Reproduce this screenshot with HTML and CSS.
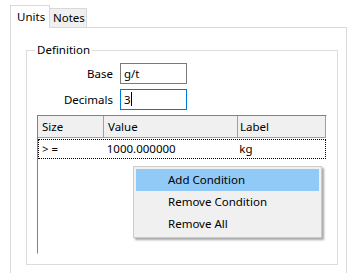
FILE: index.html
```html
<!DOCTYPE html>
<html>
<head>
<meta charset="utf-8">
<link rel="stylesheet" href="styles.css">
</head>
<body>
<div class="tabs">
  <div class="tab active">Units</div>
  <div class="tab">Notes</div>
</div>
<div class="panel">
  <fieldset class="group">
    <legend class="legend">Definition</legend>
    <div class="form">
      <label class="lbl">Base</label>
      <div class="input">g/t</div>
      <label class="lbl">Decimals</label>
      <div class="input focus">3<span class="caret"></span></div>
    </div>
    <div class="list">
      <div class="hdr">
        <div class="hc c1">Size</div>
        <div class="hc c2">Value</div>
        <div class="hc c3">Label</div>
      </div>
      <div class="row">
        <div class="rc c1">&gt; =</div>
        <div class="rc c2">1000.000000</div>
        <div class="rc c3">kg</div>
      </div>
    </div>
  </fieldset>
</div>
<div class="menu">
  <div class="mi hl">Add Condition</div>
  <div class="mi">Remove Condition</div>
  <div class="mi">Remove All</div>
</div>
</body>
</html>
```
FILE: styles.css
```css
html, body {
  margin: 0;
  padding: 0;
  background: #fff;
  font-family: "Noto Sans", "Segoe UI", sans-serif;
  font-size: 11.5px;
  color: #000;
  overflow: hidden;
  width: 347px;
  height: 273px;
}
.tabs {
  display: flex;
  align-items: flex-end;
  padding: 5px 0 0 10px;
  position: relative;
  z-index: 2;
  margin-bottom: -1px;
}
.tab {
  box-sizing: border-box;
  height: 19px;
  padding: 0 5px 0 3px;
  border: 1px solid #d9d9d9;
  border-left: none;
  border-bottom: none;
  background: #f0f0f0;
  line-height: 18px;
  width: 37px;
  margin-bottom: 1px;
}
.tab.active {
  height: 23px;
  width: 40px;
  border-left: 1px solid #d9d9d9;
  background: #fff;
  padding: 0 0 0 6px;
  line-height: 22px;
  margin-bottom: 0;
}
.panel {
  box-sizing: border-box;
  margin-left: 10px;
  width: 337px;
  height: 250px;
  border: 1px solid #d9d9d9;
  padding: 14px 8px 0 15px;
}
.group {
  margin: 0;
  padding: 0 11px 0 10px;
  border: 1px solid #dcdcdc;
  width: 312px;
  box-sizing: border-box;
  height: 223px;
  min-width: 0;
}
.legend {
  padding: 0 2px;
  margin-left: -2px;
  line-height: 16px;
}
.form {
  display: grid;
  grid-template-columns: 76px 67px;
  column-gap: 7px;
  row-gap: 5px;
  margin-top: 5px;
}
.lbl {
  text-align: right;
  line-height: 21px;
}
.input {
  box-sizing: border-box;
  height: 21px;
  border: 1px solid #7a7a7a;
  padding-left: 3px;
  line-height: 19px;
}
.input.focus {
  border-color: #0078d7;
}
.caret {
  display: inline-block;
  width: 1px;
  height: 14px;
  background: #000;
  vertical-align: -2px;
}
.list {
  margin-top: 5px;
  height: 139px;
  box-sizing: border-box;
  border: 1px solid #828282;
  border-right-color: #fff;
  border-bottom-color: #fff;
  width: 290px;
}
.hdr {
  display: flex;
  height: 22px;
  background: #f0f0f0;
}
.hc {
  box-sizing: border-box;
  border-right: 1px solid #a0a0a0;
  border-bottom: 1px solid #a0a0a0;
  padding-left: 4px;
  line-height: 21px;
}
.c1 { width: 66px; }
.c2 { width: 134px; }
.c3 { width: 88px; padding-left: 2px; }
.row {
  display: flex;
  margin-top: 1px;
  height: 20px;
  box-sizing: border-box;
  border: 1px dotted #000;
}
.rc {
  box-sizing: border-box;
  padding-left: 3px;
  line-height: 18px;
}
.rc.c1 { width: 65px; }
.rc.c3 { padding-left: 2px; }
.menu {
  position: absolute;
  left: 133px;
  top: 166px;
  width: 189px;
  height: 72px;
  box-sizing: border-box;
  background: #f0f0f0;
  border: 1px solid #cccccc;
  padding: 2px;
  box-shadow: 2px 2px 2px rgba(0,0,0,0.35);
}
.mi {
  height: 22px;
  line-height: 22px;
  padding-left: 32px;
}
.mi.hl {
  background: #91c9f7;
}
```
